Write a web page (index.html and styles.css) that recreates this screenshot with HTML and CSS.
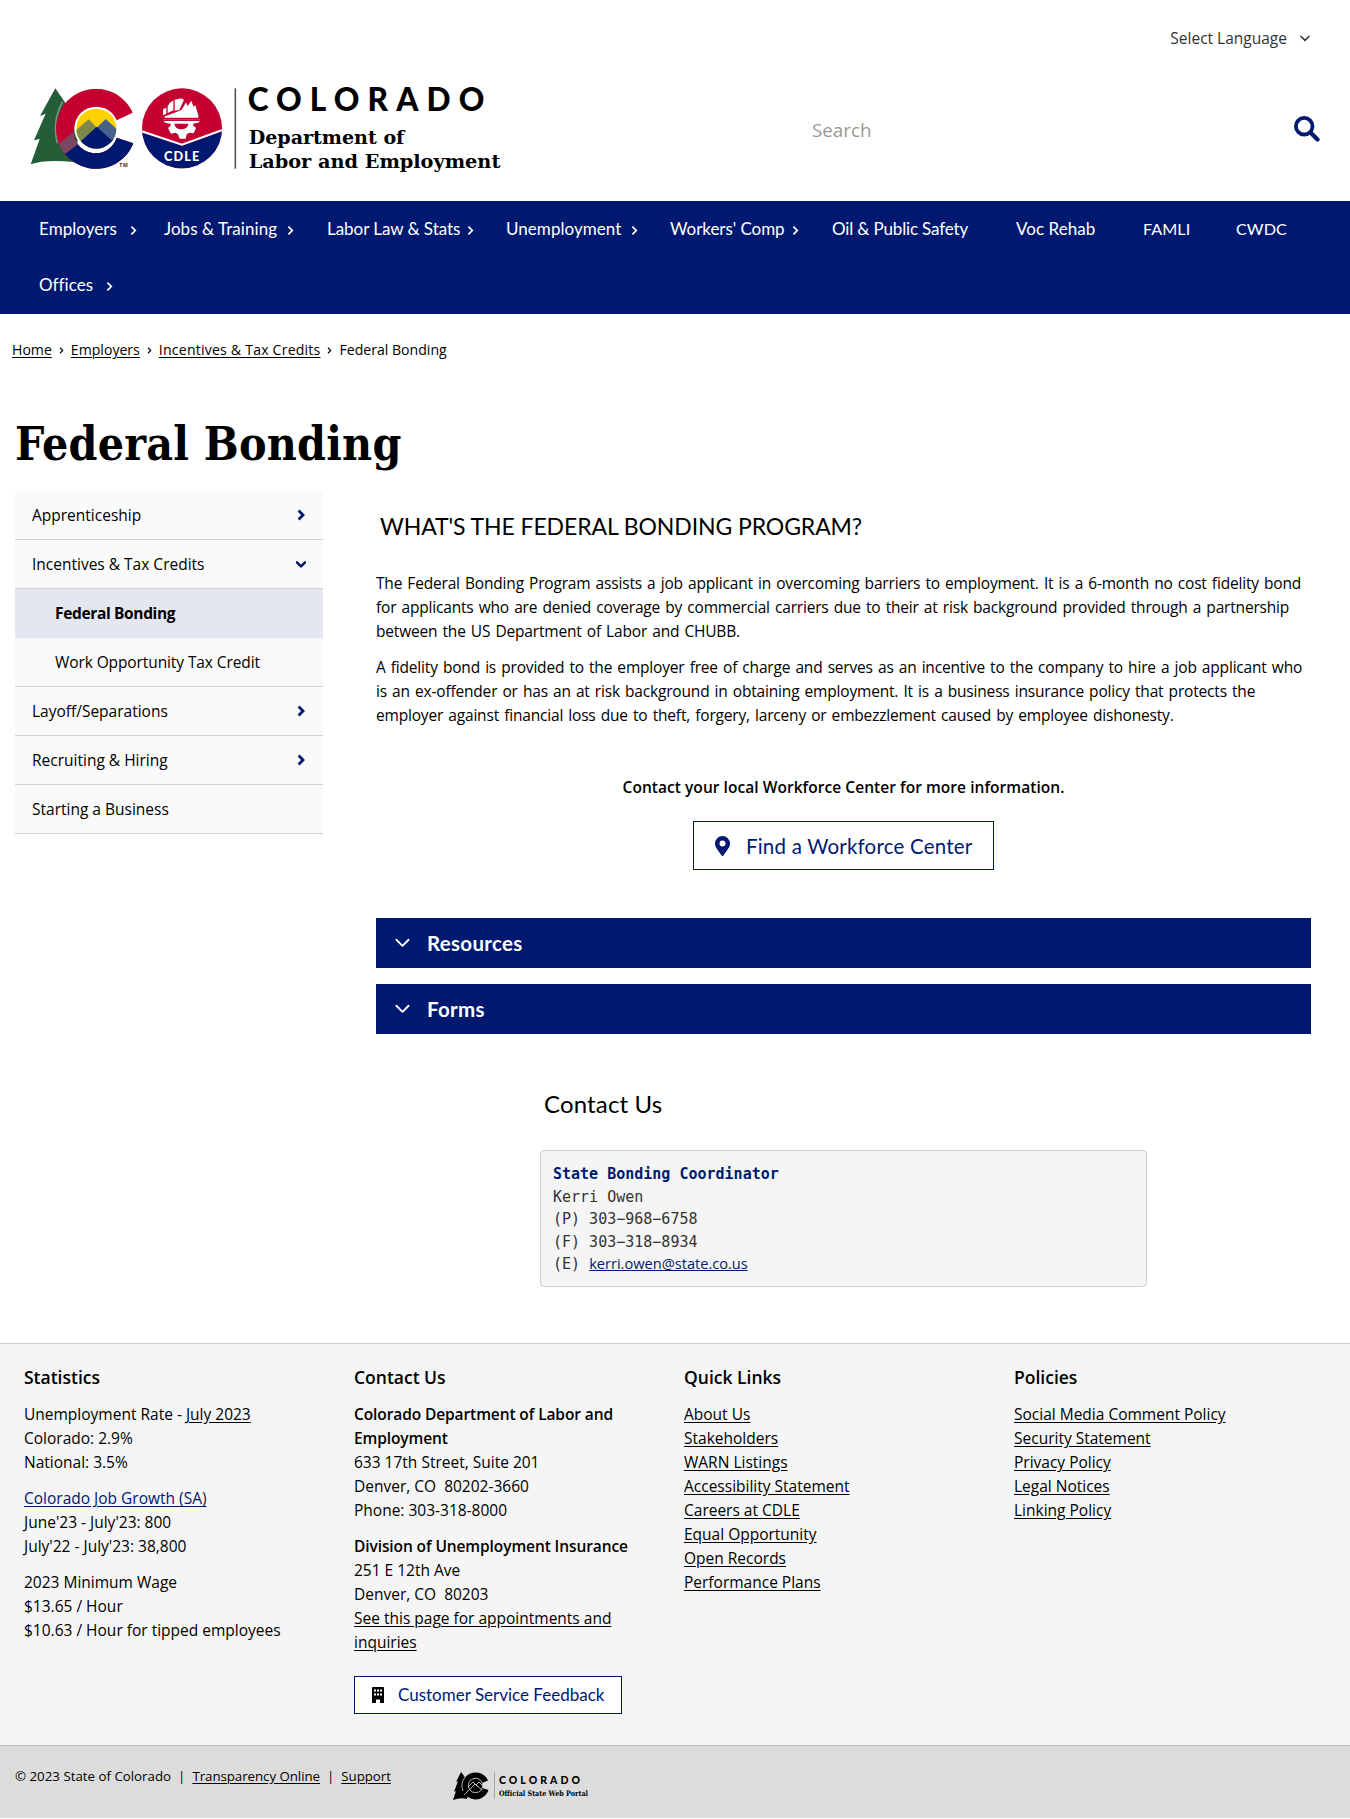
FILE: index.html
```
<!DOCTYPE html>
<html lang="en">
<head>
<meta charset="utf-8">
<title>Federal Bonding | Colorado Department of Labor and Employment</title>
<link rel="stylesheet" href="styles.css">
</head>
<body>
<svg class="defs" aria-hidden="true">
  <symbol id="angle" viewBox="0 0 8 12"><path d="M1.6 1.6 6 6l-4.400 4.400" fill="none" stroke="currentColor" stroke-width="var(--w, 2)"/></symbol>
  <symbol id="chev" viewBox="0 0 16 10"><path d="M1.500 1.500 8 8l6.500-6.500" fill="none" stroke="currentColor" stroke-width="var(--w, 2)" stroke-linecap="round" stroke-linejoin="round"/></symbol>
</svg>

<header class="header">
  <div class="language">Select Language <svg class="language-icon"><use href="#chev"/></svg></div>
  <div class="masthead">
    <svg class="logo" viewBox="90 50 1440 300" role="img" aria-label="Colorado Department of Labor and Employment">
      <defs>
        <clipPath id="sun"><circle cx="289" cy="205" r="60"/></clipPath>
        <clipPath id="badge"><circle cx="546" cy="204" r="120"/></clipPath>
        <clipPath id="cshape"><path d="M398 157A120 120 0 1 0 400 249L350 232A66 66 0 1 1 345 182Z"/></clipPath>
      </defs>
      <path fill="#245d38" d="M166 84 120 167 137 160 102 240 119 236 92 312Q135 296 222 305L240 200 200 133Z"/>
      <path fill="#fff" opacity=".35" d="M190 125Q158 185 175 246L170 250Q152 185 186 121Z"/>
      <g clip-path="url(#cshape)">
        <rect x="160" y="80" width="250" height="250" fill="#c3002f"/>
        <path fill="#001970" d="M192 280 245 240 300 200 420 200V340H160Z"/>
        <path fill="#7a4662" d="M176 250 232 206 252 238 192 283Z"/>
      </g>
      <circle cx="289" cy="205" r="66" fill="#fff"/>
      <g clip-path="url(#sun)">
        <rect x="225" y="140" width="130" height="130" fill="#ffd100"/>
        <path fill="#7c8749" d="M222 215 266 177 292 204 250 245H222Z"/>
        <path fill="#47618a" d="M290 202 317 176 355 210V245H320Z"/>
        <path fill="#001970" d="M222 262 290 199 335 240 355 222V275H222Z"/>
      </g>
      <text class="logo-tm" x="358" y="321" textLength="25">TM</text>
      <g clip-path="url(#badge)">
        <rect x="420" y="80" width="250" height="250" fill="#c3002f"/>
        <path fill="#001970" d="M420 215 546 256 672 211V330H420Z"/>
        <path fill="none" stroke="#fff" stroke-width="6" d="M420 211 546 253 672 207"/>
      </g>
      <path fill="#fff" d="M489 147 499 142V160L489 165ZM503 138 509 128 520 120V150L503 158ZM524 118 543 114 552 118 538 149 524 151ZM545 148 558 126 563 137 574 121 581 140 586 134 595 165 595 172H493L495 168 530 155Z"/>
      <path stroke="#6c6b70" stroke-width="3" d="M488 178H602"/>
      <path fill="#fff" d="M490 182H600L594 187 580 190 579 195 588 203 581 219 568 217 560 222 557 235H539L534 222 526 217 513 220 504 203 513 195 511 190 496 187Z"/>
      <path fill="#c3002f" d="M523 190H565A21 17 0 0 1 523 190Z"/>
      <text class="logo-badge" x="492" y="301" textLength="106">CDLE</text>
      <path stroke="#4a4a4c" stroke-width="4.500" d="M706 84V325"/>
      <text class="logo-state" x="743" y="153" textLength="710">COLORADO</text>
      <text class="logo-dept" x="746" y="252" textLength="467" lengthAdjust="spacingAndGlyphs">Department of</text>
      <text class="logo-dept" x="746" y="324" textLength="755" lengthAdjust="spacingAndGlyphs">Labor and Employment</text>
    </svg>
    <div class="search">
      <span class="search-text">Search</span>
      <svg class="search-icon" viewBox="0 0 26 26"><circle cx="10.200" cy="10.200" r="8.300" fill="none" stroke="#001970" stroke-width="3.800"/><path d="m16.500 16.500 7 7" stroke="#001970" stroke-width="4.200" stroke-linecap="round"/></svg>
    </div>
  </div>
</header>

<nav class="nav">
  <a class="nav-item nav-item-wide">Employers <svg class="nav-arrow"><use href="#angle"/></svg></a>
  <a class="nav-item">Jobs &amp; Training <svg class="nav-arrow"><use href="#angle"/></svg></a>
  <a class="nav-item nav-item-labor">Labor Law &amp; Stats <svg class="nav-arrow"><use href="#angle"/></svg></a>
  <a class="nav-item">Unemployment <svg class="nav-arrow"><use href="#angle"/></svg></a>
  <a class="nav-item nav-item-labor">Workers' Comp <svg class="nav-arrow"><use href="#angle"/></svg></a>
  <a class="nav-item nav-item-oil">Oil &amp; Public Safety</a>
  <a class="nav-item">Voc Rehab</a>
  <a class="nav-item nav-item-caps">FAMLI</a>
  <a class="nav-item nav-item-caps">CWDC</a>
  <a class="nav-item nav-item-wide">Offices <svg class="nav-arrow"><use href="#angle"/></svg></a>
</nav>

<div class="breadcrumb">
  <a class="link">Home</a><svg class="crumb-arrow"><use href="#angle"/></svg><a class="link">Employers</a><svg class="crumb-arrow"><use href="#angle"/></svg><a class="link crumb-long">Incentives &amp; Tax Credits</a><svg class="crumb-arrow"><use href="#angle"/></svg><span>Federal Bonding</span>
</div>

<h1 class="title">Federal Bonding</h1>

<div class="content">
  <aside class="side">
    <a class="side-item">Apprenticeship <svg class="side-arrow"><use href="#angle"/></svg></a>
    <a class="side-item">Incentives &amp; Tax Credits <svg class="side-down"><use href="#chev"/></svg></a>
    <a class="side-item side-sub side-active">Federal Bonding</a>
    <a class="side-item side-sub">Work Opportunity Tax Credit</a>
    <a class="side-item">Layoff/Separations <svg class="side-arrow"><use href="#angle"/></svg></a>
    <a class="side-item">Recruiting &amp; Hiring <svg class="side-arrow"><use href="#angle"/></svg></a>
    <a class="side-item">Starting a Business</a>
  </aside>
  <main class="main">
    <h2 class="heading heading-caps">WHAT'S THE FEDERAL BONDING PROGRAM?</h2>
    <p class="text">The Federal Bonding Program assists a job applicant in overcoming barriers to employment. It is a 6-month no cost fidelity bond<br>for applicants who are denied coverage by commercial carriers due to their at risk background provided through a partnership<br>between the US Department of Labor and CHUBB.</p>
    <p class="text">A fidelity bond is provided to the employer free of charge and serves as an incentive to the company to hire a job applicant who<br>is an ex-offender or has an at risk background in obtaining employment. It is a business insurance policy that protects the<br>employer against financial loss due to theft, forgery, larceny or embezzlement caused by employee dishonesty.</p>
    <p class="notice">Contact your local Workforce Center for more information.</p>
    <a class="finder"><svg class="pin" viewBox="0 0 15 20"><path fill="#001970" fill-rule="evenodd" d="M7.500 0A7.500 7.500 0 0 0 0 7.500C0 10.500 1 11.500 6.600 19.500Q7.500 20.500 8.400 19.500C14 11.500 15 10.500 15 7.500A7.500 7.500 0 0 0 7.500 0ZM7.500 4.600A3 3 0 1 1 7.500 10.600 3 3 0 0 1 7.500 4.600Z"/></svg>Find a Workforce Center</a>
    <div class="accordion"><svg class="accordion-icon"><use href="#chev"/></svg>Resources</div>
    <div class="accordion"><svg class="accordion-icon"><use href="#chev"/></svg>Forms</div>
    <section class="contact">
      <h2 class="heading">Contact Us</h2>
      <div class="card">
        <strong class="card-name">State Bonding Coordinator</strong>
        <span>Kerri Owen</span>
        <span>(P) 303−968−6758</span>
        <span>(F) 303−318−8934</span>
        <span>(E) <a class="mail">kerri.owen@state.co.us</a></span>
      </div>
    </section>
  </main>
</div>

<footer class="footer">
  <div class="foot-col">
    <h3 class="foot-title">Statistics</h3>
    <p>Unemployment Rate - <a class="link">July 2023</a><br>Colorado: 2.9%<br>National: 3.5%</p>
    <p><a class="link link-blue">Colorado Job Growth (SA)</a><br>June'23 - July'23: 800<br>July'22 - July'23: 38,800</p>
    <p>2023 Minimum Wage<br>$13.65 / Hour<br>$10.63 / Hour for tipped employees</p>
  </div>
  <div class="foot-col">
    <h3 class="foot-title">Contact Us</h3>
    <p><strong>Colorado Department of Labor and<br>Employment</strong><br>633 17th Street, Suite 201<br>Denver, CO&nbsp; 80202-3660<br>Phone: 303-318-8000</p>
    <p><strong>Division of Unemployment Insurance</strong><br>251 E 12th Ave<br>Denver, CO&nbsp; 80203<br><a class="link">See this page for appointments and<br>inquiries</a></p>
    <a class="feedback"><svg class="building" viewBox="0 0 12 16"><path fill="#000" fill-rule="evenodd" d="M1 0H11Q12 0 12 1V16H8V12.500H4V16H0V1Q0 0 1 0ZM2 2.500V4.500H4V2.500ZM5 2.500V4.500H7V2.500ZM8 2.500V4.500H10V2.500ZM2 6.500V8.500H4V6.500ZM5 6.500V8.500H7V6.500ZM8 6.500V8.500H10V6.500Z"/></svg>Customer Service Feedback</a>
  </div>
  <div class="foot-col foot-links">
    <h3 class="foot-title">Quick Links</h3>
    <a class="link">About Us</a>
    <a class="link">Stakeholders</a>
    <a class="link">WARN Listings</a>
    <a class="link">Accessibility Statement</a>
    <a class="link">Careers at CDLE</a>
    <a class="link">Equal Opportunity</a>
    <a class="link">Open Records</a>
    <a class="link">Performance Plans</a>
  </div>
  <div class="foot-col foot-links">
    <h3 class="foot-title">Policies</h3>
    <a class="link">Social Media Comment Policy</a>
    <a class="link">Security Statement</a>
    <a class="link">Privacy Policy</a>
    <a class="link">Legal Notices</a>
    <a class="link">Linking Policy</a>
  </div>
</footer>

<div class="legal">
  <span>© 2023 State of Colorado</span><span class="bar">|</span><a class="link">Transparency Online</a><span class="bar">|</span><a class="link">Support</a>
  <svg class="portal" viewBox="0 0 140 30" role="img" aria-label="Colorado Official State Web Portal">
    <path d="M8 1 3 11 5 10 1 21 3 20 0 29Q8 26 14 28L18 14Z"/>
    <path d="M35 9.500A13.500 13.500 0 1 0 35.500 19L29 17A7 7 0 1 1 29 12Z"/>
    <circle cx="22.500" cy="14.500" r="7.500"/>
    <g fill="none" stroke="#dcdcdc" stroke-width=".8">
      <circle cx="22.500" cy="14.500" r="7.200"/>
      <path d="M12 6Q7 13 10 20M11 24 22 13 29 19M15 16 20 11 25 16M23 14 26 11 30 15"/>
    </g>
    <path d="M41.500 1V28" stroke="#999" stroke-width=".8"/>
    <text class="portal-state" x="46" y="12.500" textLength="81">COLORADO</text>
    <text class="portal-sub" x="46" y="24.500" textLength="89" lengthAdjust="spacingAndGlyphs">Official State Web Portal</text>
  </svg>
</div>
</body>
</html>
```
FILE: styles.css
```
* { box-sizing: border-box; }
body {
  margin: 0;
  background: #fff;
  color: #000;
  font: 15.5px/24px "Open Sans", sans-serif;
}
h1, h2, h3, p { margin: 0; }
strong { font-weight: 600; }
.defs { display: none; }
.link { color: inherit; text-decoration: underline; text-underline-offset: 2px; }
.link-blue { color: #001970; }

.header { height: 201px; padding: 26px 30px 0; }
.language {
  display: flex;
  justify-content: flex-end;
  align-items: center;
  gap: 13px;
  padding-right: 10px;
  color: #333;
}
.language-icon { width: 10px; height: 7px; --w: 2.400; }
.masthead { display: flex; align-items: flex-start; padding-top: 27px; }
.logo { width: 480px; height: 100px; flex: none; overflow: visible; }
.logo-state { font: 900 95px Lato, sans-serif; }
.logo-dept { font: bold 58px "DejaVu Serif Condensed", "DejaVu Serif", serif; }
.logo-badge { font: 900 38px Lato, sans-serif; fill: #fff; }
.logo-tm { font: bold 16px "Open Sans", sans-serif; fill: #333; }
.search {
  display: flex;
  align-items: center;
  flex: 1;
  justify-content: space-between;
  height: 86px;
  margin-top: 10px;
  padding-left: 302px;
}
.search-text { color: #999; font-size: 18.800px; }
.search-icon { width: 26px; height: 26px; margin-top: -2px; }

.nav {
  display: grid;
  grid-template-columns: 125px 163px 179px 164px 162px 184px 127px 93px auto;
  grid-auto-rows: 56px;
  height: 113px;
  padding-left: 39px;
  background: #001970;
  color: #fff;
  font: 17px/24px Lato, sans-serif;
}
.nav-item { display: flex; align-items: center; gap: 10px; letter-spacing: .05px; white-space: nowrap; }
.nav-item-wide { gap: 13px; }
.nav-item-labor { letter-spacing: -.05px; gap: 7px; }
.nav-item-oil { letter-spacing: -.150px; }
.nav-item-caps { font-size: 16.200px; }
.nav-arrow { width: 7px; height: 11px; margin-top: 2px; }

.breadcrumb { display: flex; align-items: center; height: 72px; padding-left: 12px; font-size: 14.100px; }
.crumb-arrow { width: 5px; height: 9px; margin: 0 7px; --w: 1.800; }
.crumb-long { letter-spacing: .2px; }

.title {
  padding: 24px 0 0 15px;
  height: 105px;
  font: bold 46px/68px "DejaVu Serif Condensed", "DejaVu Serif", serif;
  letter-spacing: .2px;
}

.content { display: flex; align-items: flex-start; height: 852px; padding: 0 39px 0 15px; }
.side { flex: none; width: 308px; background: #fafafa; }
.side-item {
  display: flex;
  align-items: center;
  justify-content: space-between;
  height: 49px;
  padding: 0 18px 0 17px;
  border-bottom: 1px solid #d3d3d3;
}
.side-sub { padding-left: 40px; letter-spacing: -.1px; }
.side-active { background: #e5e7f0; border-color: #e5e7f0; font-weight: 700; letter-spacing: -.350px; }
.side-arrow { width: 8px; height: 12px; color: #001970; --w: 2.800; }
.side-down { width: 10px; height: 7px; margin-right: -1px; color: #001970; --w: 4; }

.main { flex: 1; margin-left: 53px; padding-top: 19px; }
.heading { padding-left: 4px; font: 24px/32px Lato, sans-serif; letter-spacing: .15px; }
.heading-caps { margin-bottom: 29px; font-size: 23px; letter-spacing: -.1px; }
.text { margin-bottom: 12px; letter-spacing: -.18px; word-spacing: 1.300px; white-space: nowrap; }
.notice { margin-top: 48px; text-align: center; font-weight: 600; letter-spacing: .05px; }
.finder {
  display: flex;
  align-items: center;
  width: 301px;
  height: 49px;
  margin: 22px auto 48px;
  padding-left: 21px;
  gap: 16px;
  border: 1px solid #001970;
  color: #001970;
  font: 20.500px/24px Lato, sans-serif;
  letter-spacing: .2px;
}
.pin { width: 15px; height: 20px; }
.accordion {
  display: flex;
  align-items: center;
  gap: 17px;
  height: 50px;
  margin-bottom: 16px;
  padding-left: 19px;
  background: #001970;
  color: #fff;
  font: bold 20.500px/24px Lato, sans-serif;
  letter-spacing: .3px;
}
.accordion-icon { width: 15px; height: 10px; }
.contact { width: 607px; margin: 54px auto 0; }
.card {
  display: flex;
  flex-direction: column;
  height: 137px;
  margin-top: 30px;
  padding: 12px;
  border: 1px solid #ccc;
  border-radius: 4px;
  background: #f5f5f5;
  color: #333;
  font: 15px/22.500px "DejaVu Sans Mono", monospace;
}
.card-name { color: #001970; font-weight: 700; }
.mail { color: #001970; font: 14.600px/20px "Open Sans", sans-serif; text-decoration: underline; }

.footer {
  display: grid;
  grid-template-columns: repeat(4, 330px);
  height: 402px;
  padding: 21px 0 0 24px;
  border-top: 1px solid #ccc;
  background: #f5f5f5;
}
.foot-col p { margin-bottom: 12px; white-space: nowrap; }
.foot-col strong { letter-spacing: -.1px; }
.foot-title { margin-bottom: 12px; font: 600 17.500px/25px "Open Sans", sans-serif; }
.foot-links { display: flex; flex-direction: column; align-items: flex-start; }
.feedback {
  display: flex;
  align-items: center;
  gap: 14px;
  width: 268px;
  height: 38px;
  margin-top: 22px;
  padding-left: 17px;
  border: 1px solid #001970;
  background: #fff;
  color: #001970;
  font: 17px/24px Lato, sans-serif;
}
.building { width: 12px; height: 16px; }

.legal {
  display: flex;
  align-items: flex-start;
  height: 73px;
  padding: 18px 0 0 15px;
  border-top: 1px solid #bbb;
  background: #dcdcdc;
  font-size: 13.300px;
}
.legal .link { letter-spacing: -.050px; }
.bar { margin: 0 7px; }
.portal { width: 140px; height: 30px; margin: 7px 0 0 62px; overflow: visible; }
.portal-state { font: 900 10.500px Lato, sans-serif; }
.portal-sub { font: bold 7.500px "DejaVu Serif", serif; }
```
